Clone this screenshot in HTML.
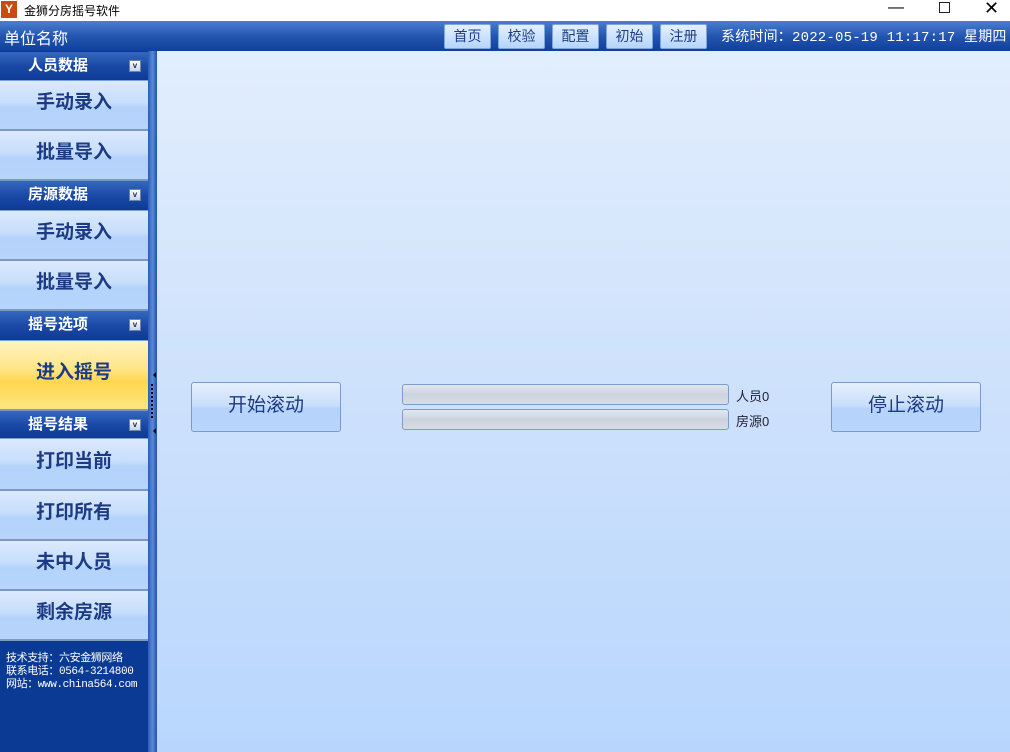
<!DOCTYPE html>
<html><head><meta charset="utf-8"><style>
*{margin:0;padding:0;box-sizing:border-box}
body{width:1010px;height:752px;overflow:hidden;font-family:"Liberation Sans","Noto Sans CJK SC","WenQuanYi Zen Hei",sans-serif;background:#fff;position:relative}
.abs{position:absolute}
.title{left:0;top:0;width:1010px;height:21px;background:#fff;font-size:12px}
.logo{left:1px;top:1px;width:16px;height:17px;background:#c84b14;color:#fff;font-weight:bold;font-size:12px;text-align:center;line-height:17px}
.hdr{left:0;top:21px;width:1010px;height:30px;background:linear-gradient(#4a7fd0,#2456b0 50%,#0f3f9c);color:#fff}
.tb{top:24px;height:25px;background:linear-gradient(#e4f0fe,#b5d5fb);border:1px solid #7fa6d8;border-radius:2px;color:#1c3e86;font-size:14px;text-align:center;line-height:23px}
.side{left:0;top:51px;width:148px;height:701px;background:#0a3a94}
.sh{left:0;width:148px;background:linear-gradient(#3468c0,#1b4aa6 50%,#0c3a95);color:#fff;font-weight:bold;font-size:15px;line-height:28px;text-indent:28px;border-bottom:1px solid #7aa0d8}
.sh i{position:absolute;right:7px;top:8px;width:12px;height:12px;background:linear-gradient(#fff,#c8d4e4);border:1px solid #6b86b0;font-style:normal;font-size:8px;line-height:10px;text-align:center;text-indent:0;color:#234}
.si{left:0;width:148px;background:linear-gradient(#dbe9fd,#c7defc 45%,#b3d3fb 55%,#b7d5fb);color:#1d3a84;font-size:19px;text-align:center;border-bottom:2px solid #7d98c4;font-weight:bold}
.split{left:148px;top:51px;width:9px;height:701px;background:linear-gradient(90deg,#2a5cb5,#5a8ad8,#2352aa)}
.main{left:157px;top:51px;width:853px;height:701px;background:linear-gradient(#e2eefd,#cfe2fc 45%,#b8d6fd)}
.btn{top:382px;width:150px;height:50px;background:linear-gradient(#e4f0fe,#c9def9 48%,#b5d3fb 52%,#b9d7fc);border:1px solid #7a9bc8;border-radius:3px;color:#1d3a84;font-size:19px;text-align:center;line-height:46px}
.bar{left:402px;width:327px;height:21px;background:linear-gradient(#e2e6ee,#cdd3de 50%,#d6dbe4);border:1px solid #7f9cc6;border-radius:3px}
.lbl{left:736px;font-size:13px;color:#223}
</style></head><body>
<div class="abs title"><div class="abs logo">Y</div><span class="abs" style="left:24px;top:2px">金狮分房摇号软件</span>
<span class="abs" style="left:888px;top:-1px;font-size:16px">—</span>
<span class="abs" style="left:939px;top:2px;width:11px;height:11px;border:1px solid #222"></span>
<span class="abs" style="left:984px;top:-2px;font-size:18px">✕</span></div>
<div class="abs hdr"><span class="abs" style="left:4px;top:4px;font-size:16px">单位名称</span>
<span class="abs" style="left:721px;top:5px;font-size:14px;letter-spacing:0.2px;white-space:nowrap;font-family:'Liberation Mono','Noto Sans CJK SC',monospace">系统时间：2022-05-19 11:17:17 星期四</span></div>
<div class="abs tb" style="left:444px;width:47px">首页</div>
<div class="abs tb" style="left:498px;width:47px">校验</div>
<div class="abs tb" style="left:552px;width:47px">配置</div>
<div class="abs tb" style="left:606px;width:47px">初始</div>
<div class="abs tb" style="left:660px;width:47px">注册</div>
<div class="abs side"></div>
<div class="abs sh" style="top:52px;height:29px">人员数据<i>v</i></div>
<div class="abs si" style="top:81px;height:50px;line-height:44px">手动录入</div>
<div class="abs si" style="top:131px;height:50px;line-height:44px">批量导入</div>
<div class="abs sh" style="top:181px;height:30px">房源数据<i>v</i></div>
<div class="abs si" style="top:211px;height:50px;line-height:44px">手动录入</div>
<div class="abs si" style="top:261px;height:50px;line-height:44px">批量导入</div>
<div class="abs sh" style="top:311px;height:30px">摇号选项<i>v</i></div>
<div class="abs si" style="top:341px;height:70px;line-height:64px;background:linear-gradient(#fff3c0,#ffe68a 40%,#ffd650 60%,#ffe680)">进入摇号</div>
<div class="abs sh" style="top:411px;height:28px">摇号结果<i>v</i></div>
<div class="abs si" style="top:439px;height:52px;line-height:46px">打印当前</div>
<div class="abs si" style="top:491px;height:50px;line-height:44px">打印所有</div>
<div class="abs si" style="top:541px;height:50px;line-height:44px">未中人员</div>
<div class="abs si" style="top:591px;height:50px;line-height:44px">剩余房源</div>
<div class="abs" style="left:6px;top:653px;color:#fff;font-size:11px;line-height:13px;letter-spacing:-0.4px;white-space:nowrap;font-family:'Liberation Mono','Noto Sans CJK SC',monospace">技术支持：六安金狮网络<br>联系电话：0564-3214800<br>网站：www.china564.com</div>
<div class="abs split"></div>
<div class="abs" style="left:150px;top:372px;width:0;height:0;border:3px solid transparent;border-right:3px solid #001"></div>
<div class="abs" style="left:151px;top:384px;width:2px;height:34px;border-left:2px dotted #001"></div>
<div class="abs" style="left:150px;top:428px;width:0;height:0;border:3px solid transparent;border-right:3px solid #001"></div>
<div class="abs main"></div>
<div class="abs btn" style="left:191px">开始滚动</div>
<div class="abs btn" style="left:831px">停止滚动</div>
<div class="abs bar" style="top:384px"></div>
<div class="abs bar" style="top:409px"></div>
<div class="abs lbl" style="top:386px">人员0</div>
<div class="abs lbl" style="top:411px">房源0</div>
</body></html>
